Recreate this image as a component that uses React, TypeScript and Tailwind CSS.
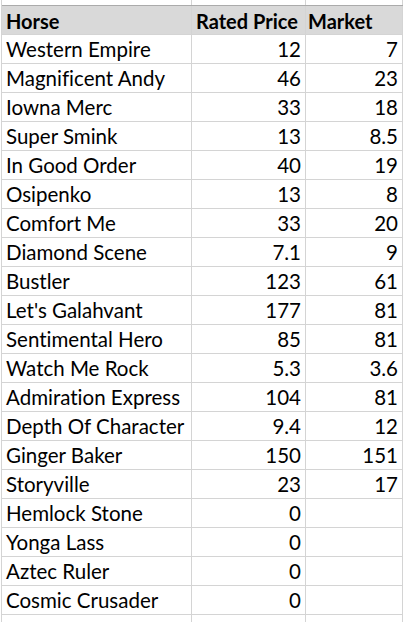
const rows: [string, string, string][] = [
  ['Western Empire', '12', '7'],
  ['Magnificent Andy', '46', '23'],
  ['Iowna Merc', '33', '18'],
  ['Super Smink', '13', '8.5'],
  ['In Good Order', '40', '19'],
  ['Osipenko', '13', '8'],
  ['Comfort Me', '33', '20'],
  ['Diamond Scene', '7.1', '9'],
  ['Bustler', '123', '61'],
  ["Let's Galahvant", '177', '81'],
  ['Sentimental Hero', '85', '81'],
  ['Watch Me Rock', '5.3', '3.6'],
  ['Admiration Express', '104', '81'],
  ['Depth Of Character', '9.4', '12'],
  ['Ginger Baker', '150', '151'],
  ['Storyville', '23', '17'],
  ['Hemlock Stone', '0', ''],
  ['Yonga Lass', '0', ''],
  ['Aztec Ruler', '0', ''],
  ['Cosmic Crusader', '0', ''],
];

function Row({ cells, header }: { cells: [string, string, string]; header?: boolean }) {
  const base = 'h-[29px] pt-px border-r border-b border-[#d4d4d4] flex items-center overflow-hidden whitespace-nowrap';
  return (
    <div className={`flex ${header ? 'bg-[#d9d9d9] font-bold text-[20px]' : 'text-[20.5px]'}`}>
      <div className={`${base} w-[190px] pl-[4px]`}>{cells[0]}</div>
      <div className={`${base} w-[114px] ${header ? 'pl-[4px]' : 'justify-end pr-[4px]'}`}>{cells[1]}</div>
      <div className={`${base} w-[97px] ${header ? 'pl-[2px]' : 'justify-end pr-[4px]'}`}>{cells[2]}</div>
    </div>
  );
}

export default function App() {
  return (
    <div className="w-[405px] h-[622px] overflow-hidden bg-white text-black font-['Lato',sans-serif] [font-variant-ligatures:none]">
      <div className="ml-px border-l border-[#d4d4d4] w-[402px]">
        <div className="flex h-[6px] border-b border-[#ababab]">
          <div className="w-[190px] border-r border-[#d4d4d4]" />
          <div className="w-[114px] border-r border-[#d4d4d4]" />
          <div className="w-[97px] border-r border-[#d4d4d4]" />
        </div>
        <Row header cells={['Horse', 'Rated Price', 'Market']} />
        {rows.map((r) => (
          <Row key={r[0]} cells={r} />
        ))}
        <Row cells={['', '', '']} />
      </div>
    </div>
  );
}
